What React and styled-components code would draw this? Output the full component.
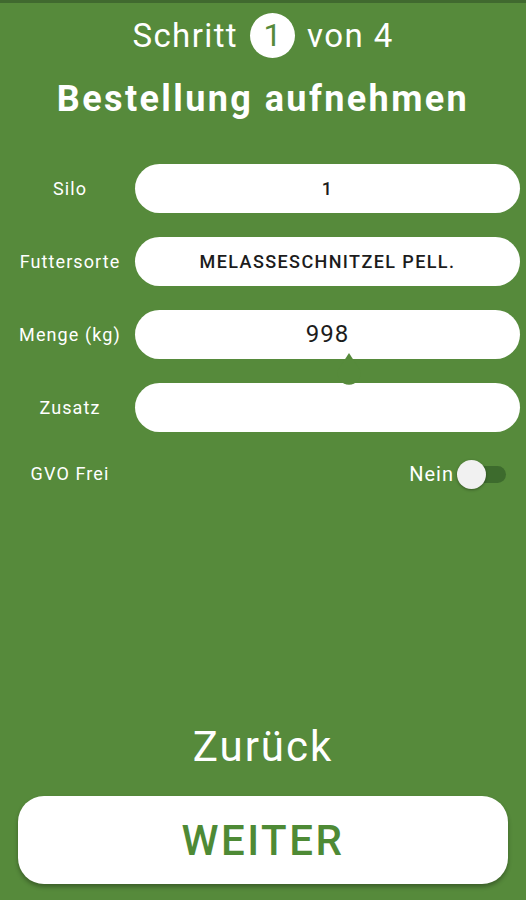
import styled, { createGlobalStyle } from 'styled-components';

const GREEN = '#568a3b';

const GlobalStyle = createGlobalStyle`
  html, body {
    margin: 0;
    padding: 0;
    background: ${GREEN};
  }
  * {
    box-sizing: border-box;
  }
`;

const Screen = styled.div`
  width: 526px;
  height: 900px;
  background: ${GREEN};
  border-top: 3px solid #40692f;
  font-family: Roboto, 'Liberation Sans', sans-serif;
  color: #fff;
  display: flex;
  flex-direction: column;
  overflow: hidden;
`;

const StepLine = styled.div`
  display: flex;
  align-items: center;
  justify-content: center;
  gap: 12px;
  font-size: 33px;
  letter-spacing: 1.4px;
  height: 62px;
  padding-top: 2px;
`;

const StepBadge = styled.span`
  width: 45px;
  height: 45px;
  border-radius: 50%;
  background: #fff;
  color: ${GREEN};
  display: flex;
  align-items: center;
  justify-content: center;
  font-size: 32px;
  letter-spacing: 0;
`;

const Title = styled.h1`
  margin: 0;
  text-align: center;
  font-size: 36px;
  font-weight: 700;
  letter-spacing: 2.4px;
  line-height: 68px;
`;

const FormList = styled.div`
  display: flex;
  flex-direction: column;
  gap: 24px;
  margin-top: 31px;
  padding-right: 6px;
`;

const Row = styled.div`
  display: flex;
  align-items: center;
  height: ${p => p.$h || 49}px;
`;

const Label = styled.label`
  width: 130px;
  margin-left: 5px;
  text-align: center;
  font-size: 18px;
  letter-spacing: 1.1px;
  flex-shrink: 0;
`;

const FieldBox = styled.div`
  position: relative;
  flex: 1;
  height: 49px;
  background: #fff;
  border-radius: 25px;
  display: flex;
  align-items: center;
  justify-content: center;
  color: #1c1c1c;
  font-size: ${p => (p.$big ? 24 : 18)}px;
  font-weight: ${p => (p.$big ? 400 : 500)};
  letter-spacing: ${p => (p.$big ? 1 : 1.4)}px;
  padding-bottom: ${p => (p.$big ? 2 : 0)}px;
`;

const CursorHandle = styled.svg`
  position: absolute;
  left: 202px;
  top: 43px;
  z-index: 2;
`;

const ToggleWrap = styled.div`
  margin-left: auto;
  display: flex;
  align-items: center;
  gap: 2px;
  font-size: 20px;
  letter-spacing: 1px;
  margin-right: 14px;
  margin-top: 2px;
`;

const Track = styled.div`
  position: relative;
  width: 44px;
  height: 17px;
  border-radius: 9px;
  background: #3d6b2d;
  margin-left: 6px;
`;

const Thumb = styled.div`
  position: absolute;
  left: -5px;
  top: -6px;
  width: 29px;
  height: 29px;
  border-radius: 50%;
  background: #f1f1f1;
  box-shadow: 0 1px 3px rgba(0, 0, 0, 0.35);
`;

const Spacer = styled.div`
  flex: 1;
`;

const BackLink = styled.div`
  text-align: center;
  font-size: 42px;
  letter-spacing: 2px;
  line-height: 50px;
  margin-bottom: 24px;
`;

const NextButton = styled.button`
  margin: 0 18px 16px 18px;
  height: 88px;
  border: none;
  border-radius: 26px;
  background: #fff;
  color: #4e8a35;
  font-family: Roboto, 'Liberation Sans', sans-serif;
  font-size: 42px;
  font-weight: 500;
  letter-spacing: 2.5px;
  box-shadow: 0 3px 4px rgba(0, 0, 0, 0.3);
`;

function Field({ label, value, big, handle }) {
  return (
    <Row>
      <Label>{label}</Label>
      <FieldBox $big={big}>
        {value}
        {handle && (
          <CursorHandle width="24" height="35" viewBox="0 0 24 35">
            <path d="M12 0 L23 17 A11.5 11.5 0 1 1 1 17 Z" fill={GREEN} />
          </CursorHandle>
        )}
      </FieldBox>
    </Row>
  );
}

export default function App() {
  return (
    <>
      <GlobalStyle />
      <Screen>
        <StepLine>
          <span>Schritt</span>
          <StepBadge>1</StepBadge>
          <span>von 4</span>
        </StepLine>
        <Title>Bestellung aufnehmen</Title>

        <FormList>
          <Field label="Silo" value="1" />
          <Field label="Futtersorte" value="MELASSESCHNITZEL PELL." />
          <Field label="Menge (kg)" value="998" big handle />
          <Field label="Zusatz" value="" />
          <Row $h={34}>
            <Label>GVO Frei</Label>
            <ToggleWrap>
              Nein
              <Track>
                <Thumb />
              </Track>
            </ToggleWrap>
          </Row>
        </FormList>

        <Spacer />
        <BackLink>Zurück</BackLink>
        <NextButton>WEITER</NextButton>
      </Screen>
    </>
  );
}
